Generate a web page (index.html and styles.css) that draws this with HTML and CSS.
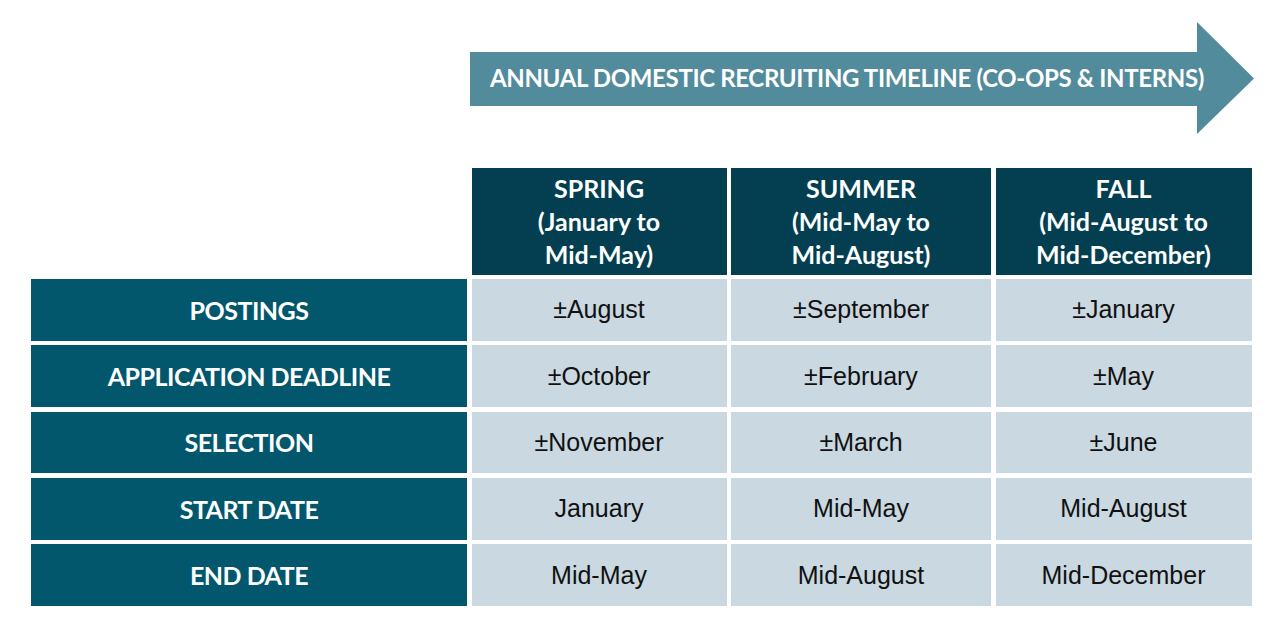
FILE: index.html
```html
<!DOCTYPE html>
<html lang="en">
<head>
<meta charset="utf-8">
<title>Annual Domestic Recruiting Timeline</title>
<link rel="stylesheet" href="styles.css">
</head>
<body>
<div class="page">
  <div class="arrow">
    <div class="arrow-body"><span class="arrow-title">ANNUAL DOMESTIC RECRUITING TIMELINE (CO-OPS &amp; INTERNS)</span></div>
  </div>
  <div class="timeline">
    <div class="corner"></div>
    <div class="season">SPRING<br>(January to<br>Mid-May)</div>
    <div class="season">SUMMER<br>(Mid-May to<br>Mid-August)</div>
    <div class="season">FALL<br>(Mid-August to<br>Mid-December)</div>

    <div class="label">POSTINGS</div>
    <div class="cell">±August</div>
    <div class="cell">±September</div>
    <div class="cell">±January</div>

    <div class="label">APPLICATION DEADLINE</div>
    <div class="cell">±October</div>
    <div class="cell">±February</div>
    <div class="cell">±May</div>

    <div class="label">SELECTION</div>
    <div class="cell">±November</div>
    <div class="cell">±March</div>
    <div class="cell">±June</div>

    <div class="label">START DATE</div>
    <div class="cell">January</div>
    <div class="cell">Mid-May</div>
    <div class="cell">Mid-August</div>

    <div class="label">END DATE</div>
    <div class="cell">Mid-May</div>
    <div class="cell">Mid-August</div>
    <div class="cell">Mid-December</div>
  </div>
</div>
</body>
</html>
```
FILE: styles.css
```css
html, body {
  margin: 0;
  padding: 0;
  background: #ffffff;
}

.page {
  padding: 22px 0 0 31px;
  font-family: Lato, "Liberation Sans", sans-serif;
}

.arrow {
  margin-left: 439px;
  width: 784px;
  height: 112px;
  background: #528b9b;
  clip-path: polygon(0 30px, 727px 30px, 727px 0, 784px 56.5px, 727px 112px, 727px 84px, 0 84px);
  display: flex;
  align-items: center;
}

.arrow-body {
  padding-left: 20px;
  white-space: nowrap;
}

.arrow-title {
  color: #ffffff;
  font-weight: bold;
  font-size: 24px;
  letter-spacing: -0.35px;
  line-height: 30px;
}

.timeline {
  margin-top: 34px;
  display: grid;
  grid-template-columns: 436px 255px 260px 256px;
  grid-template-rows: 106.5px repeat(5, 61.8px);
  column-gap: 4.5px;
  row-gap: 4.5px;
}

.season {
  background: #033f51;
  color: #ffffff;
  font-weight: bold;
  font-size: 25px;
  line-height: 33px;
  display: flex;
  align-items: center;
  justify-content: center;
  text-align: center;
}

.label {
  background: #03576d;
  color: #ffffff;
  font-weight: bold;
  font-size: 25px;
  letter-spacing: -0.5px;
  display: flex;
  align-items: center;
  justify-content: center;
}

.cell {
  background: #c9d8e1;
  color: #111111;
  font-family: "Liberation Sans", Arial, sans-serif;
  font-size: 25px;
  display: flex;
  align-items: center;
  justify-content: center;
}
```
